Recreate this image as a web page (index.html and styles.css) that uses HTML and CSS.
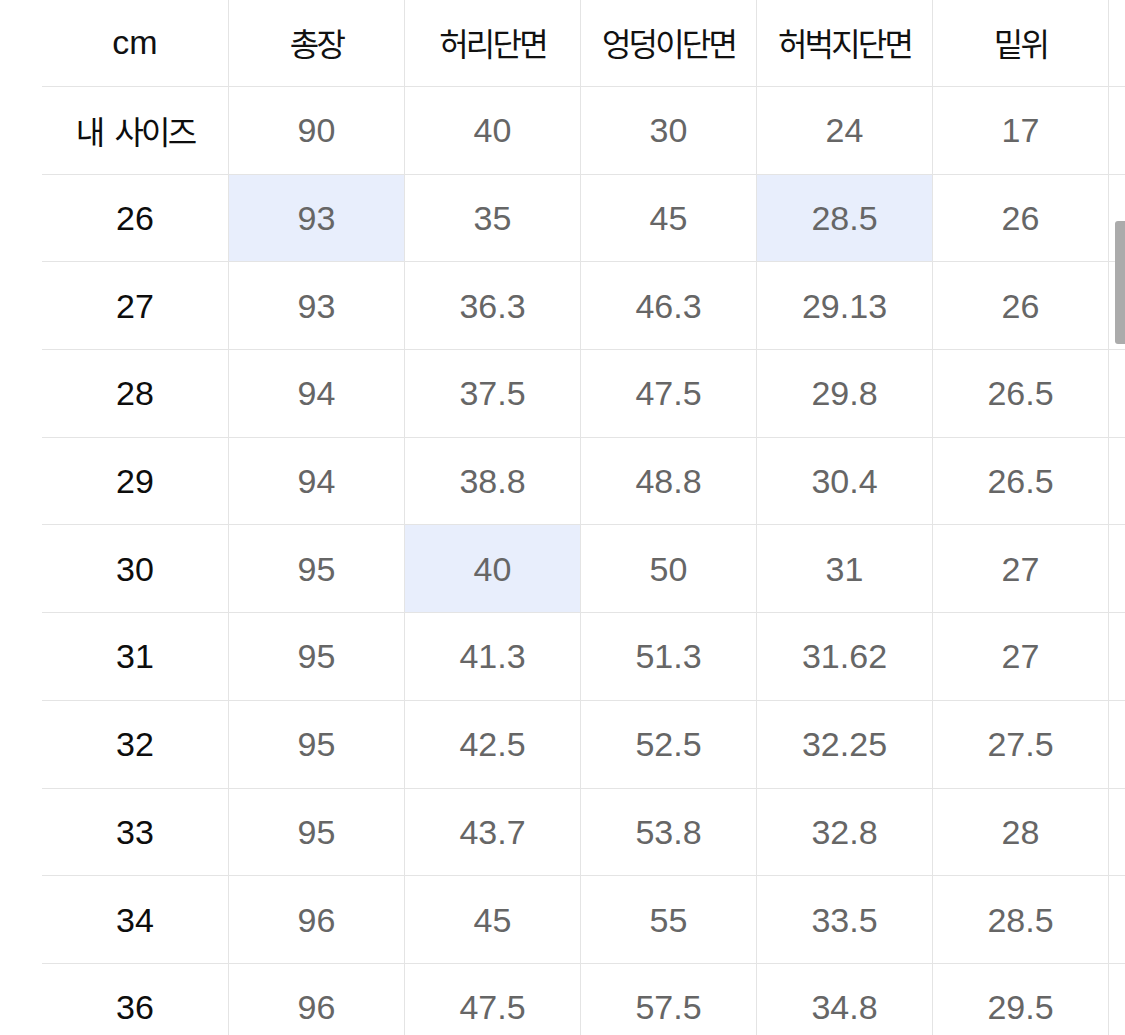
FILE: index.html
```html
<!DOCTYPE html>
<html lang="ko">
<head>
<meta charset="utf-8">
<title>사이즈 표</title>
<link rel="stylesheet" href="styles.css">
</head>
<body>
<div class="viewport">
  <div class="size-grid">
    <div class="cell head">cm</div>
    <div class="cell head ko">총장</div>
    <div class="cell head ko">허리단면</div>
    <div class="cell head ko">엉덩이단면</div>
    <div class="cell head ko">허벅지단면</div>
    <div class="cell head ko">밑위</div>
    <div class="cell head"></div>

    <div class="cell label ko wide">내 사이즈</div>
    <div class="cell val">90</div><div class="cell val">40</div><div class="cell val">30</div><div class="cell val">24</div><div class="cell val">17</div><div class="cell"></div>

    <div class="cell label">26</div>
    <div class="cell val hl">93</div><div class="cell val">35</div><div class="cell val">45</div><div class="cell val hl">28.5</div><div class="cell val">26</div><div class="cell"></div>

    <div class="cell label">27</div>
    <div class="cell val">93</div><div class="cell val">36.3</div><div class="cell val">46.3</div><div class="cell val">29.13</div><div class="cell val">26</div><div class="cell"></div>

    <div class="cell label">28</div>
    <div class="cell val">94</div><div class="cell val">37.5</div><div class="cell val">47.5</div><div class="cell val">29.8</div><div class="cell val">26.5</div><div class="cell"></div>

    <div class="cell label">29</div>
    <div class="cell val">94</div><div class="cell val">38.8</div><div class="cell val">48.8</div><div class="cell val">30.4</div><div class="cell val">26.5</div><div class="cell"></div>

    <div class="cell label">30</div>
    <div class="cell val">95</div><div class="cell val hl">40</div><div class="cell val">50</div><div class="cell val">31</div><div class="cell val">27</div><div class="cell"></div>

    <div class="cell label">31</div>
    <div class="cell val">95</div><div class="cell val">41.3</div><div class="cell val">51.3</div><div class="cell val">31.62</div><div class="cell val">27</div><div class="cell"></div>

    <div class="cell label">32</div>
    <div class="cell val">95</div><div class="cell val">42.5</div><div class="cell val">52.5</div><div class="cell val">32.25</div><div class="cell val">27.5</div><div class="cell"></div>

    <div class="cell label">33</div>
    <div class="cell val">95</div><div class="cell val">43.7</div><div class="cell val">53.8</div><div class="cell val">32.8</div><div class="cell val">28</div><div class="cell"></div>

    <div class="cell label">34</div>
    <div class="cell val">96</div><div class="cell val">45</div><div class="cell val">55</div><div class="cell val">33.5</div><div class="cell val">28.5</div><div class="cell"></div>

    <div class="cell label">36</div>
    <div class="cell val">96</div><div class="cell val">47.5</div><div class="cell val">57.5</div><div class="cell val">34.8</div><div class="cell val">29.5</div><div class="cell"></div>
  </div>
  <div class="scrollbar"></div>
</div>
</body>
</html>
```

FILE: styles.css
```css
html, body {
  margin: 0;
  padding: 0;
  background: #ffffff;
}

.viewport {
  position: relative;
  width: 1125px;
  height: 1035px;
  overflow: hidden;
  padding-left: 42px;
  box-sizing: border-box;
}

.size-grid {
  display: grid;
  grid-template-columns: 187px repeat(5, 176px) 240px;
  grid-template-rows: 87px;
  grid-auto-rows: 87.7px;
  width: max-content;
  font-family: "Liberation Sans", "Noto Sans CJK KR", sans-serif;
  font-size: 34px;
}

.cell {
  box-sizing: border-box;
  border-right: 1px solid #e4e4e4;
  border-bottom: 1px solid #e4e4e4;
  display: flex;
  align-items: center;
  justify-content: center;
  white-space: nowrap;
  color: #111111;
  line-height: 1;
}

.ko {
  font-family: "Noto Sans CJK KR", sans-serif;
  font-size: 32px;
  letter-spacing: -2.8px;
  font-weight: 400;
}

.wide {
  word-spacing: 6px;
}

.head {
  padding-bottom: 2px;
}

.label {
  color: #0d0d0d;
}

.val {
  color: #666666;
}

.hl {
  background: #e8eefc;
}

.scrollbar {
  position: absolute;
  right: 0;
  top: 221px;
  width: 10px;
  height: 123px;
  background: #ababab;
  border-radius: 3px 0 0 3px;
}
```
